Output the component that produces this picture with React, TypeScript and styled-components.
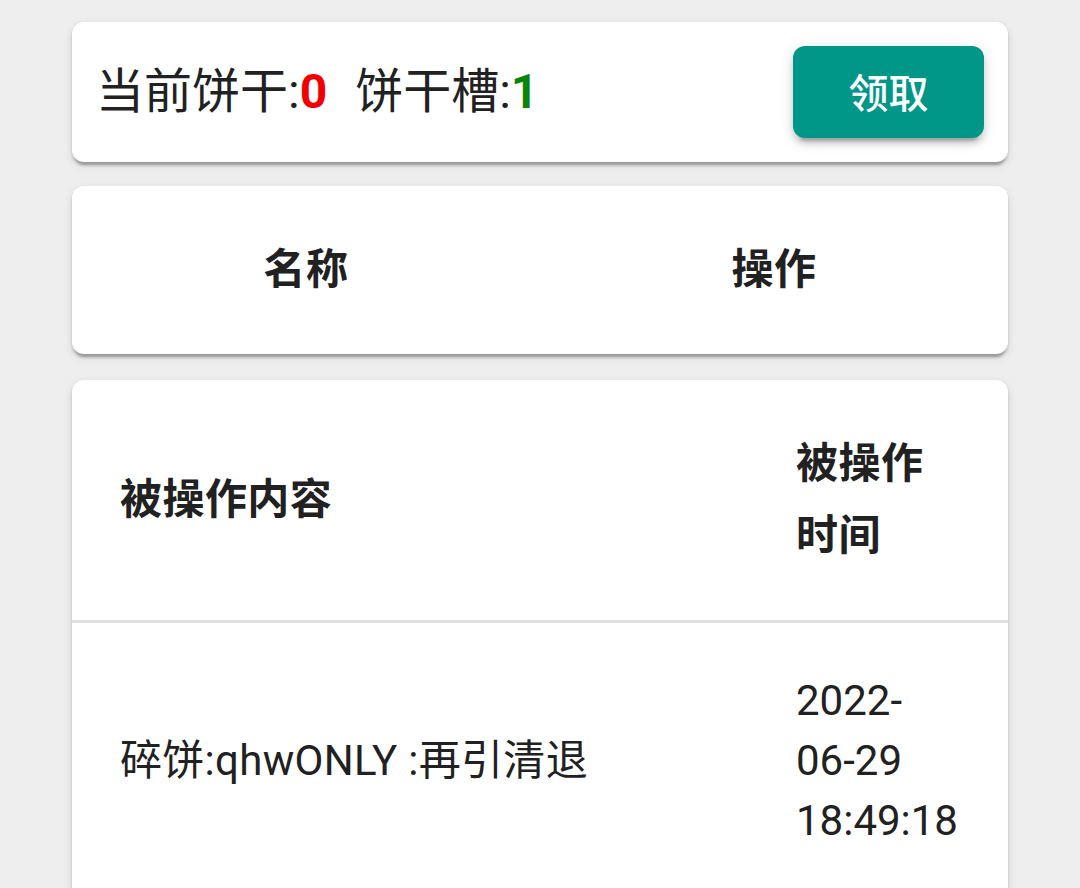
import React from "react";
import styled, { createGlobalStyle } from "styled-components";

const GlobalStyle = createGlobalStyle`
  html, body {
    margin: 0;
    padding: 0;
    background: #eeeeee;
  }
  body {
    font-family: Roboto, "Noto Sans CJK SC", "Noto Sans", sans-serif;
    color: rgba(0, 0, 0, 0.87);
  }
`;

const Page = styled.div`
  display: flex;
  flex-direction: column;
  gap: 24px;
  padding: 22px 72px 0;
  height: 888px;
  box-sizing: border-box;
  overflow: hidden;
`;

const Card = styled.div<{ $extraTop?: number }>`
  background: #ffffff;
  border-radius: 12px;
  box-shadow: 0 6px 3px -3px rgba(0, 0, 0, 0.2), 0 3px 3px 0 rgba(0, 0, 0, 0.14),
    0 3px 9px 0 rgba(0, 0, 0, 0.12);
  overflow: hidden;
  flex-shrink: 0;
  margin-top: ${(p) => p.$extraTop || 0}px;
`;

const Toolbar = styled(Card)`
  display: flex;
  align-items: center;
  justify-content: space-between;
  padding: 24px;
`;

const Status = styled.div`
  font-size: 48px;
  line-height: 1.2;
  color: #212121;
`;

const Count = styled.span<{ $color: string }>`
  color: ${(p) => p.$color};
  font-weight: 700;
`;

const Gap = styled.span`
  display: inline-block;
  width: 28px;
`;

const ClaimButton = styled.button`
  width: 191px;
  height: 92px;
  border: none;
  border-radius: 12px;
  background: #009688;
  color: #ffffff;
  font-family: Roboto, "Noto Sans CJK SC", sans-serif;
  font-size: 40px;
  font-weight: 500;
  padding: 0 0 2px 0;
  box-shadow: 0 9px 3px -6px rgba(0, 0, 0, 0.2), 0 6px 6px 0 rgba(0, 0, 0, 0.14),
    0 3px 15px 0 rgba(0, 0, 0, 0.12);
  cursor: pointer;
`;

const Table = styled.table`
  width: 100%;
  border-collapse: collapse;
  table-layout: fixed;
`;

const HeadCell = styled.th<{ $align?: string; $width?: string }>`
  padding: 48px;
  font-size: 42px;
  line-height: 72px;
  font-weight: 700;
  letter-spacing: 0.45px;
  color: #212121;
  text-align: ${(p) => p.$align || "left"};
  vertical-align: middle;
  width: ${(p) => p.$width || "auto"};
  box-sizing: border-box;
`;

const BorderedHeadCell = styled(HeadCell)`
  border-bottom: 3px solid #e0e0e0;
`;

const BodyCell = styled.td`
  padding: 48px;
  font-size: 42px;
  line-height: 1.43;
  font-weight: 400;
  letter-spacing: 0.3px;
  color: #212121;
  vertical-align: middle;
  word-break: break-word;
`;

const TimeCell = styled(BodyCell)`
  letter-spacing: 0;
  word-break: normal;
`;

export default function App() {
  return (
    <>
      <GlobalStyle />
      <Page>
        <Toolbar>
          <Status>
            当前饼干:<Count $color="#f00000">0</Count>
            <Gap />
            饼干槽:<Count $color="#0a850a">1</Count>
          </Status>
          <ClaimButton>领取</ClaimButton>
        </Toolbar>

        <Card>
          <Table>
            <thead>
              <tr>
                <HeadCell $align="center">名称</HeadCell>
                <HeadCell $align="center">操作</HeadCell>
              </tr>
            </thead>
          </Table>
        </Card>

        <Card $extraTop={2}>
          <Table>
            <thead>
              <tr>
                <BorderedHeadCell>被操作内容</BorderedHeadCell>
                <BorderedHeadCell $width="260px">被操作时间</BorderedHeadCell>
              </tr>
            </thead>
            <tbody>
              <tr>
                <BodyCell>碎饼:qhwONLY :再引清退</BodyCell>
                <TimeCell>2022-06-29 18:49:18</TimeCell>
              </tr>
            </tbody>
          </Table>
        </Card>
      </Page>
    </>
  );
}
